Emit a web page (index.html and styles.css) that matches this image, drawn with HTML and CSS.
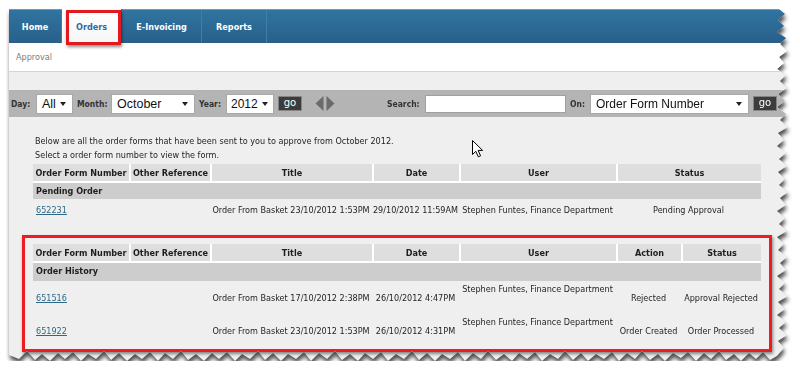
FILE: index.html
```html
<!DOCTYPE html>
<html lang="en">
<head>
    <meta charset="UTF-8">
    <meta name="viewport" content="width=device-width, initial-scale=1.0">
    <title>Orders - Approval</title>
    <link rel="stylesheet" href="styles.css">
</head>
<body>

    <div class="frame">
        <div class="sheet">
            <nav class="tabs">
                <a href="#" class="tab tab-home">Home</a>
                <a href="#" class="tab tab-orders active">Orders</a>
                <a href="#" class="tab tab-invoicing">E-Invoicing</a>
                <a href="#" class="tab tab-reports">Reports</a>
                <span class="callout"></span>
            </nav>

            <div class="crumbs">Approval</div>

            <div class="content">
                <div class="filters">
                    <span class="lbl lbl-day">Day:</span>
                    <span class="select sel-day">All<i class="caret"></i></span>
                    <span class="lbl lbl-month">Month:</span>
                    <span class="select sel-month">October<i class="caret"></i></span>
                    <span class="lbl lbl-year">Year:</span>
                    <span class="select sel-year">2012<i class="caret"></i></span>
                    <span class="go">go</span>
                    <svg class="pager" width="21" height="15" viewBox="0 0 21 15">
                        <polygon points="8.5,0 8.5,15 0.5,7.5" fill="#6b6b6b"/>
                        <polygon points="11.5,0 11.5,15 19.5,7.5" fill="#6b6b6b"/>
                    </svg>
                    <span class="lbl lbl-search">Search:</span>
                    <input type="text" class="search-box">
                    <span class="lbl lbl-on">On:</span>
                    <span class="select sel-on">Order Form Number<i class="caret"></i></span>
                    <span class="go">go</span>
                </div>

                <p class="intro">
                    Below are all the order forms that have been sent to you to approve from October 2012.<br>
                    Select a order form number to view the form.
                </p>

                <table class="orders">
                    <thead>
                        <tr>
                            <th class="c-num">Order Form Number</th>
                            <th class="c-ref">Other Reference</th>
                            <th class="c-title">Title</th>
                            <th class="c-date">Date</th>
                            <th class="c-user">User</th>
                            <th class="c-status">Status</th>
                        </tr>
                    </thead>
                    <tbody>
                        <tr class="group"><td colspan="6">Pending Order</td></tr>
                        <tr class="row">
                            <td class="num"><a href="#">652231</a></td>
                            <td></td>
                            <td>Order From Basket 23/10/2012 1:53PM</td>
                            <td>29/10/2012 11:59AM</td>
                            <td>Stephen Funtes, Finance Department</td>
                            <td>Pending Approval</td>
                        </tr>
                    </tbody>
                </table>

                <div class="highlight">
                    <table class="orders history">
                        <thead>
                            <tr>
                                <th class="c-num">Order Form Number</th>
                                <th class="c-ref">Other Reference</th>
                                <th class="c-title">Title</th>
                                <th class="c-date">Date</th>
                                <th class="c-user">User</th>
                                <th class="c-action">Action</th>
                                <th class="c-state">Status</th>
                            </tr>
                        </thead>
                        <tbody>
                            <tr class="group"><td colspan="7">Order History</td></tr>
                            <tr class="row tall">
                                <td class="num"><a href="#">651516</a></td>
                                <td></td>
                                <td>Order From Basket 17/10/2012 2:38PM</td>
                                <td>26/10/2012 4:47PM</td>
                                <td class="user">Stephen Funtes, Finance Department</td>
                                <td>Rejected</td>
                                <td>Approval Rejected</td>
                            </tr>
                            <tr class="row tall">
                                <td class="num"><a href="#">651922</a></td>
                                <td></td>
                                <td>Order From Basket 23/10/2012 1:53PM</td>
                                <td>26/10/2012 4:31PM</td>
                                <td class="user">Stephen Funtes, Finance Department</td>
                                <td>Order Created</td>
                                <td>Order Processed</td>
                            </tr>
                        </tbody>
                    </table>
                </div>

                <svg class="cursor" width="13" height="18" viewBox="0 0 13 18">
                    <path d="M0.5 0.5 L0.5 14.5 L3.8 11.3 L6.3 16.8 L8.6 15.8 L6.1 10.4 L10.6 10.4 Z" fill="#fff" stroke="#000" stroke-width="1" stroke-linejoin="miter"/>
                </svg>
            </div>
        </div>
    </div>

</body>
</html>
```

FILE: styles.css
```css
body {
    margin: 0;
    background: #fff;
    font-family: 'DejaVu Sans Condensed', 'DejaVu Sans', sans-serif;
    font-size: 9px;
    color: #1e1e1e;
}
.frame {
    width: 780px;
    margin: 9px 0 0 9px;
    filter: drop-shadow(1px 4px 2px rgba(0,0,0,0.7));
}
.sheet {
    position: relative;
    width: 780px;
    height: 352px;
    display: flex;
    flex-direction: column;
    background: #efefef;
    clip-path: polygon(0 0, 770px 0,
        776px 5px, 769px 11px, 775px 17px, 768px 23px, 777px 29px, 771px 35px, 778px 42px, 770px 48px,
        775px 54px, 768px 60px, 777px 66px, 771px 72px, 778px 79px, 769px 85px, 776px 92px, 768px 98px,
        777px 105px, 771px 111px, 779px 118px, 769px 124px, 775px 131px, 768px 137px, 777px 144px, 770px 150px,
        778px 157px, 769px 163px, 776px 170px, 770px 176px, 779px 183px, 771px 189px, 777px 196px, 768px 202px,
        776px 209px, 770px 215px, 778px 222px, 768px 228px, 775px 235px, 769px 241px, 778px 248px, 771px 254px,
        777px 261px, 768px 267px, 776px 274px, 770px 280px, 779px 287px, 769px 293px, 776px 300px, 768px 306px,
        777px 313px, 770px 319px, 778px 326px, 769px 332px, 775px 339px, 768px 347px,
        761px 351px, 754px 343px, 747px 350px, 740px 344px, 732px 352px, 725px 345px, 717px 351px, 710px 342px,
        702px 350px, 695px 344px, 687px 352px, 679px 343px, 672px 349px, 664px 344px, 656px 352px, 649px 345px,
        641px 351px, 633px 342px, 626px 350px, 618px 344px, 610px 352px, 603px 343px, 595px 350px, 587px 345px,
        579px 352px, 572px 344px, 564px 351px, 556px 342px, 549px 350px, 541px 345px, 533px 352px, 526px 343px,
        518px 350px, 510px 344px, 503px 352px, 495px 345px, 487px 351px, 479px 342px, 472px 350px, 464px 344px,
        456px 352px, 449px 343px, 441px 350px, 433px 345px, 426px 352px, 418px 344px, 410px 351px, 403px 342px,
        395px 350px, 387px 345px, 379px 352px, 372px 343px, 364px 350px, 356px 344px, 349px 352px, 341px 345px,
        333px 351px, 326px 342px, 318px 350px, 310px 344px, 302px 352px, 295px 343px, 287px 350px, 279px 345px,
        272px 352px, 264px 344px, 256px 351px, 249px 342px, 241px 350px, 233px 345px, 226px 352px, 218px 343px,
        210px 350px, 203px 344px, 195px 352px, 187px 345px, 179px 351px, 172px 342px, 164px 350px, 156px 344px,
        149px 352px, 141px 343px, 133px 350px, 126px 345px, 118px 352px, 110px 344px, 102px 351px, 95px 342px,
        87px 350px, 79px 345px, 72px 352px, 64px 343px, 56px 350px, 49px 344px, 41px 352px, 33px 345px,
        26px 351px, 18px 342px, 10px 350px, 0 346px);
}

/* top navigation */
.tabs {
    display: flex;
    height: 34px;
    background: linear-gradient(#3074a0, #28608a);
    border-top: 1px solid #6a9cc0;
    box-sizing: border-box;
}
.tab {
    display: flex;
    align-items: center;
    justify-content: center;
    box-sizing: border-box;
    height: 100%;
    padding-top: 1px;
    color: #fff;
    font-weight: bold;
    font-size: 9px;
    text-decoration: none;
    border-right: 1px solid #3e7ea8;
}
.tab-home { width: 53px; }
.tab-orders { width: 60px; }
.tab-invoicing { width: 80px; }
.tab-reports { width: 65px; }
.tab.active {
    background: linear-gradient(#fff, #f6f6f6);
    color: #2b6ca6;
    height: 34px;
    margin-top: -1px;
    border-right-color: #2a6088;
}
.callout {
    position: absolute;
    left: 57px;
    top: 1px;
    width: 55px;
    height: 35px;
    box-sizing: border-box;
    border: 3px solid #e21a1f;
    box-shadow: 1px 2px 3px rgba(0,0,0,0.45);
}

.crumbs {
    height: 29px;
    box-sizing: border-box;
    line-height: 28px;
    padding-left: 7px;
    background: #fff;
    border-bottom: 1px solid #d4d4d4;
    color: #7c7c7c;
}

.content {
    position: relative;
    flex: 1;
    padding-top: 18px;
}

/* filter bar */
.filters {
    display: flex;
    align-items: center;
    gap: 4px;
    height: 27px;
    padding-left: 2px;
    background: #b4b4b4;
}
.lbl {
    font-weight: bold;
    font-size: 8.5px;
    color: #333;
}
.lbl-day { width: 21px; }
.lbl-month { width: 30px; }
.lbl-year { width: 23px; }
.lbl-search { width: 34px; margin-left: 47px; }
.lbl-on { width: 16px; }
.select {
    display: flex;
    flex-shrink: 0;
    align-items: center;
    justify-content: space-between;
    box-sizing: border-box;
    height: 20px;
    padding: 0 6px 0 5px;
    background: #fff;
    border: 1px solid #a8a8a8;
    font-family: 'Liberation Sans', Arial, sans-serif;
    font-size: 12.5px;
    color: #111;
}
.sel-day { width: 37px; }
.sel-month { width: 84px; }
.sel-year { width: 48px; font-size: 12px; padding: 0 5px 0 4px; }
.sel-on { width: 159px; font-size: 12px; }
.caret {
    width: 0;
    height: 0;
    border-left: 3.5px solid transparent;
    border-right: 3.5px solid transparent;
    border-top: 4px solid #222;
}
.go {
    display: flex;
    align-items: center;
    justify-content: center;
    box-sizing: border-box;
    width: 24px;
    height: 15px;
    background: #3c3c3c;
    border: 1px solid #858585;
    color: #fff;
    font-family: 'DejaVu Sans', sans-serif;
    font-size: 10px;
    padding-bottom: 2px;
}
.pager { margin-left: 9px; }
.search-box {
    box-sizing: border-box;
    width: 141px;
    height: 18px;
    margin: 0;
    border: 1px solid #a0a0a0;
    background: #fff;
}

.intro {
    margin: 17px 0 0 26px;
    line-height: 14px;
}

/* order tables */
.orders {
    table-layout: fixed;
    width: 728px;
    border-collapse: separate;
    border-spacing: 0;
    margin: 2px 0 0 24px;
}
.orders th {
    box-sizing: border-box;
    height: 17px;
    padding: 0;
    background: #dedede;
    font-weight: bold;
    text-align: center;
    white-space: nowrap;
    border-left: 2px solid #fff;
}
.orders th:first-child { border-left: 0; }
.c-num { width: 96px; }
.c-ref { width: 81px; }
.c-title { width: 162px; }
.c-date { width: 87px; }
.c-user { width: 157px; }
.c-status { width: 145px; }
.c-action { width: 65px; }
.c-state { width: 80px; }
.group td {
    height: 16px;
    padding: 0 3px;
    background: #cdcdcd;
    border-top: 2px solid #fff;
    font-weight: bold;
}
.history .group td {
    height: 18px;
    vertical-align: top;
    line-height: 16px;
}
.row td {
    height: 22px;
    padding: 0;
    text-align: center;
    white-space: nowrap;
}
.row td.num {
    text-align: left;
    padding-left: 3px;
}
.row a {
    color: #2f6886;
}
.row.tall td { height: 30px; }
.row.tall td.user {
    vertical-align: top;
    padding-top: 3px;
}

.highlight {
    width: 750px;
    box-sizing: border-box;
    margin: 14px 0 0 13px;
    padding: 6px 8px 2px 8px;
    border: 3px solid #ec1c22;
    box-shadow: 1px 2px 3px rgba(0,0,0,0.45);
}
.highlight .orders { margin: 0; }

.cursor {
    position: absolute;
    left: 463px;
    top: 68px;
}
```
